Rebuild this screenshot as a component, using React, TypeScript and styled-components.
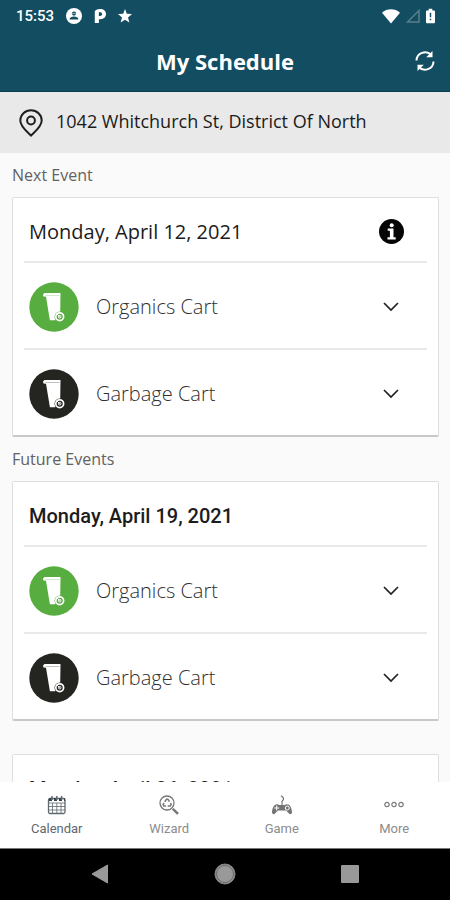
import React from "react";
import styled, { createGlobalStyle } from "styled-components";

const GlobalStyle = createGlobalStyle`
  *, *::before, *::after { box-sizing: border-box; }
  body { margin: 0; background: #fafafa; font-family: "Open Sans", "Noto Sans", sans-serif; }
  button { font: inherit; color: inherit; background: none; border: 0; padding: 0; cursor: pointer; }
  h1, h2, h3, p, ul { margin: 0; padding: 0; font-weight: inherit; }
  svg { display: block; flex: none; }
`;

const Screen = styled.div`
  display: flex;
  flex-direction: column;
  height: 100vh;
  overflow: hidden;
`;

const Header = styled.header`
  flex: none;
  background: #134d62;
  color: #fff;
  border-bottom: 1px solid #0c3f52;
`;

const StatusBar = styled.div`
  display: flex;
  align-items: center;
  justify-content: space-between;
  height: 32px;
  padding: 0 15px 0 16px;
`;

const StatusGroup = styled.div<{ $gap: number }>`
  display: flex;
  align-items: center;
  gap: ${(p) => p.$gap}px;
`;

const Clock = styled.time`
  font: 500 15px/20px Roboto, sans-serif;
`;

const TitleBar = styled.div`
  display: grid;
  grid-template-columns: 1fr auto 1fr;
  align-items: center;
  height: 59px;
  padding: 0 14px 1px;
`;

const Title = styled.h1`
  grid-column: 2;
  font-size: 22px;
  line-height: 30px;
  font-weight: 700;
`;

const RefreshButton = styled.button`
  justify-self: end;
`;

const AddressBar = styled.div`
  flex: none;
  display: flex;
  align-items: center;
  gap: 12px;
  height: 61px;
  padding: 0 18px;
  background: #e9e9e9;
  color: #1b1b1b;
  font-size: 18px;
  line-height: 24px;
`;

const Address = styled.p`
  padding-bottom: 3px;
`;

const Schedule = styled.main`
  flex: 1;
  min-height: 0;
  overflow: hidden;
  padding: 0 11px 0 12px;
`;

const SectionTitle = styled.h2`
  height: 44px;
  font-size: 16px;
  line-height: 45px;
  color: #626262;
`;

const Card = styled.article`
  margin-bottom: 33px;
  padding: 0 11px;
  background: #fff;
  border: 1px solid #dedede;
  border-bottom: 2px solid #c8c8c8;
  border-radius: 2px;
`;

const Section = styled.section`
  & > ${Card}:last-child { margin-bottom: 0; }
`;

const CardHeader = styled.div`
  display: flex;
  align-items: center;
  justify-content: space-between;
  height: 63px;
  padding: 4px 23px 0 5px;
`;

const EventDate = styled.h3<{ $strong?: boolean }>`
  color: #1c1c1c;
  font-family: ${(p) => (p.$strong ? "Roboto" : '"Open Sans"')}, sans-serif;
  font-weight: ${(p) => (p.$strong ? 500 : 400)};
  font-size: 20px;
  line-height: 28px;
`;

const CartRow = styled.button`
  display: flex;
  align-items: center;
  gap: 17px;
  width: 100%;
  height: 87px;
  padding: 2px 28px 0 5px;
  border-top: 2px solid #e9e9e9;
  text-align: left;
`;

const CartName = styled.span`
  flex: 1;
  font-size: 20px;
  line-height: 28px;
  font-weight: 300;
  color: #303030;
`;

const TabBar = styled.nav`
  flex: none;
  display: grid;
  grid-template-columns: repeat(4, 1fr);
  height: 67px;
  background: #fff;
  border-bottom: 1px solid #777;
`;

const Tab = styled.button<{ $active?: boolean }>`
  && { color: ${(p) => (p.$active ? "#5e686e" : "#8c8c8c")}; }
  display: flex;
  flex-direction: column;
  align-items: center;
  gap: 4px;
  padding: 13px 0 0 1px;
  font: 400 13px/20px Roboto, sans-serif;
`;

const SystemBar = styled.nav`
  flex: none;
  display: flex;
  align-items: center;
  justify-content: center;
  gap: 105px;
  height: 51px;
  padding-bottom: 2px;
  background: #000;
`;

const AccountIcon = () => (
  <svg width="16" height="16" viewBox="0 0 16 16" aria-hidden="true">
    <circle cx="8" cy="8" r="8" fill="#fff" />
    <circle cx="8" cy="5.6" r="2.1" fill="#134d62" />
    <path d="M3.6 11.4c0-3.8 8.8-3.8 8.8 0z" fill="#134d62" />
    <path d="M6.2 5.6h3.6" stroke="#fff" strokeWidth=".6" />
  </svg>
);

const ParkingIcon = () => (
  <svg width="12" height="14" viewBox="0 0 12 14" aria-hidden="true">
    <path d="M.800 2Q2.500 0 6 0c3.700 0 6 2 6 5s-2.300 5.200-5.500 5.200H4.900V14H.8z" fill="#fff" />
    <path d="M4.900 3.300v3.800h.9c1.500 0 2.300-.7 2.300-2S7.300 3.200 5.800 3.200z" fill="#134d62" />
  </svg>
);

const StarIcon = () => (
  <svg width="14" height="14" viewBox="0 0 14 14" aria-hidden="true">
    <path d="m7 0 1.8 4.8 5.2.3-4 3.3 1.4 5.2L7 10.7l-4.4 2.9L4 8.4 0 5.1l5.2-.3z" fill="#fff" />
  </svg>
);

const WifiIcon = () => (
  <svg width="18" height="15" viewBox="0 0 18 15" aria-hidden="true">
    <path d="M0 3.7C5-.8 13-.8 18 3.7L9 14.5z" fill="#fff" />
  </svg>
);

const SignalIcon = () => (
  <svg width="14" height="14" viewBox="0 0 14 14" aria-hidden="true">
    <path d="M13 1.5V13H1.5z" fill="none" stroke="#587f8d" strokeWidth="1.5" />
  </svg>
);

const BatteryIcon = () => (
  <svg width="9" height="16" viewBox="0 0 10 16" aria-hidden="true">
    <path d="M3 0h4v2h2q1 0 1 1v12q0 1-1 1H1q-1 0-1-1V3q0-1 1-1h2z" fill="#fff" />
    <path d="M5 4.5v5M5 11v1.7" stroke="#134d62" strokeWidth="1.6" />
  </svg>
);

const RefreshIcon = () => (
  <svg width="22" height="22" viewBox="0 0 22 22" aria-hidden="true" fill="none" stroke="#fff" strokeWidth="2">
    <path d="M2.5 10.5C2.7 2.8 12.2-.3 17.2 5M19.5 11.5C19.3 19.2 9.8 22.3 4.8 17" />
    <path d="M18.5 1v6.3h-6.3zM3.5 21v-6.3h6.3z" fill="#fff" stroke="none" />
  </svg>
);

const PinIcon = () => (
  <svg width="26" height="28" viewBox="0 0 26 28" aria-hidden="true" fill="none" stroke="#202020" strokeWidth="2">
    <path d="M13 26.5C9.5 23 2.3 17.8 2.3 11.5a10.7 10.2 0 0 1 21.4 0c0 6.300-7.200 11.500-10.700 15z" />
    <circle cx="13" cy="11.500" r="3.900" />
  </svg>
);

const InfoIcon = () => (
  <svg width="25" height="25" viewBox="0 0 25 25" aria-hidden="true">
    <circle cx="12.5" cy="12.500" r="12.500" fill="#050505" />
    <circle cx="12.7" cy="6.300" r="2" fill="#fff" />
    <path d="M8.700 9.500h5.800v8.800h2.200v2.200H8.500v-2.200h2.400v-6.500H8.700z" fill="#fff" />
  </svg>
);

const ChevronIcon = () => (
  <svg width="16" height="10" viewBox="0 0 16 10" aria-hidden="true">
    <path d="m1 1 7 7 7-7" fill="none" stroke="#222" strokeWidth="1.700" />
  </svg>
);

const CartIcon = ({ color }: { color: string }) => (
  <svg width="50" height="50" viewBox="0 0 50 50" aria-hidden="true">
    <circle cx="25" cy="25" r="24.700" fill={color} />
    <path d="M14 12.500 15.500 11H31.500l-.3 21-5 6.300h-5.300L17 14.800l-2.500-.3z" fill="#fff" />
    <path d="M16.500 13.500h14" stroke={color} strokeWidth=".5" opacity=".55" />
    <circle cx="30.700" cy="34.700" r="5.200" fill={color} />
    <circle cx="30.700" cy="34.700" r="3.900" fill="none" stroke="#fff" strokeWidth="1.700" />
    <circle cx="30.700" cy="34.700" r="1.300" fill="none" stroke="#fff" strokeWidth="1" />
    <path d="M28 32 30.700 34.700" stroke="#fff" strokeWidth="1" />
  </svg>
);

const CalendarIcon = () => (
  <svg width="20" height="20" viewBox="0 0 20 20" aria-hidden="true" fill="none" stroke="#5f696e">
    <rect x="1.500" y="3.500" width="16.500" height="15" rx="1.500" strokeWidth="1.300" />
    <path d="M2 8h16M2 11.500h16M2 15h16M5.500 8v10M9.800 8v10M14 8v10" strokeWidth=".8" />
    <path d="M2 4.500h16" stroke="#39434c" strokeWidth="3" strokeDasharray="3 2" />
    <path d="M5 1v4M9.800 1v4M14.600 1v4" strokeWidth="1.500" />
  </svg>
);

const WizardIcon = () => (
  <svg width="20" height="20" viewBox="0 0 20 20" aria-hidden="true" fill="none" stroke="#777">
    <circle cx="8" cy="8" r="7" strokeWidth="1.300" />
    <path d="m5.700 6.700 1.800-2.500h1.400l1.600 2.500M11.400 8l.8 1.500-1 1.600H8.700M7 11.100H4.900L4 9.500l1-1.700" strokeWidth="1.500" />
    <path d="m13.800 13.800 5.200 5" strokeWidth="2.500" />
  </svg>
);

const GameIcon = () => (
  <svg width="22" height="20" viewBox="0 0 22 20" aria-hidden="true">
    <path d="M11 10V6.500Q13.500 4 12 2.300 11 1.500 10 .8" fill="none" stroke="#737373" strokeWidth="1.100" />
    <path d="M5 9.500Q7 8.700 8 10h6q1-1.300 3-.5c2.500.6 3.800 4.400 4 8q-.5 2.500-2.500 1.500L15 15.500H7L3.500 19Q1.500 20 1 17.500c.2-3.600 1.500-7.400 4-8z" fill="#737373" />
    <path d="M5.700 10.500v5M3.200 13h5" stroke="#fff" />
    <circle cx="16.300" cy="13" r="2" fill="none" stroke="#fff" />
  </svg>
);

const MoreIcon = () => (
  <svg width="20" height="20" viewBox="0 0 20 20" aria-hidden="true" fill="none" stroke="#7c7c7c" strokeWidth="1.200">
    <circle cx="3" cy="9.500" r="2.200" />
    <circle cx="10" cy="9.500" r="2.200" />
    <circle cx="17" cy="9.500" r="2.200" />
  </svg>
);

const BackIcon = () => (
  <svg width="18" height="20" viewBox="0 0 18 20" aria-hidden="true">
    <path d="M16.500 1v18L1 10z" fill="#999" stroke="#999" strokeLinejoin="round" />
  </svg>
);

const HomeIcon = () => (
  <svg width="22" height="22" viewBox="0 0 22 22" aria-hidden="true">
    <circle cx="11" cy="11" r="10" fill="#999" stroke="#888" />
    <circle cx="11" cy="11" r="8.500" fill="none" stroke="#555" strokeWidth=".7" />
  </svg>
);

const RecentsIcon = () => (
  <svg width="18" height="18" viewBox="0 0 18 18" aria-hidden="true">
    <rect width="18" height="18" rx="1" fill="#999" />
  </svg>
);

const carts = [
  { name: "Organics Cart", color: "#58ad40" },
  { name: "Garbage Cart", color: "#242421" },
];

const EventCard = ({ date, next }: { date: string; next?: boolean }) => (
  <Card>
    <CardHeader>
      <EventDate $strong={!next}>{date}</EventDate>
      {next && (
        <button aria-label="Event information">
          <InfoIcon />
        </button>
      )}
    </CardHeader>
    {carts.map((cart) => (
      <CartRow key={cart.name} aria-expanded="false">
        <CartIcon color={cart.color} />
        <CartName>{cart.name}</CartName>
        <ChevronIcon />
      </CartRow>
    ))}
  </Card>
);

const tabs = [
  { label: "Calendar", Icon: CalendarIcon },
  { label: "Wizard", Icon: WizardIcon },
  { label: "Game", Icon: GameIcon },
  { label: "More", Icon: MoreIcon },
];

export default function App() {
  return (
    <Screen>
      <GlobalStyle />
      <Header>
        <StatusBar>
          <StatusGroup $gap={12}>
            <Clock>15:53</Clock>
            <AccountIcon />
            <ParkingIcon />
            <StarIcon />
          </StatusGroup>
          <StatusGroup $gap={6}>
            <WifiIcon />
            <SignalIcon />
            <BatteryIcon />
          </StatusGroup>
        </StatusBar>
        <TitleBar>
          <Title>My Schedule</Title>
          <RefreshButton aria-label="Refresh">
            <RefreshIcon />
          </RefreshButton>
        </TitleBar>
      </Header>
      <AddressBar>
        <PinIcon />
        <Address>1042 Whitchurch St, District Of North</Address>
      </AddressBar>
      <Schedule>
        <Section>
          <SectionTitle>Next Event</SectionTitle>
          <EventCard date="Monday, April 12, 2021" next />
        </Section>
        <Section>
          <SectionTitle>Future Events</SectionTitle>
          <EventCard date="Monday, April 19, 2021" />
          <EventCard date="Monday, April 26, 2021" />
        </Section>
      </Schedule>
      <TabBar aria-label="Main">
        {tabs.map(({ label, Icon }, i) => (
          <Tab key={label} $active={i === 0} aria-current={i === 0 ? "page" : undefined}>
            <Icon />
            {label}
          </Tab>
        ))}
      </TabBar>
      <SystemBar aria-label="System">
        <button aria-label="Back"><BackIcon /></button>
        <button aria-label="Home"><HomeIcon /></button>
        <button aria-label="Recent apps"><RecentsIcon /></button>
      </SystemBar>
    </Screen>
  );
}
